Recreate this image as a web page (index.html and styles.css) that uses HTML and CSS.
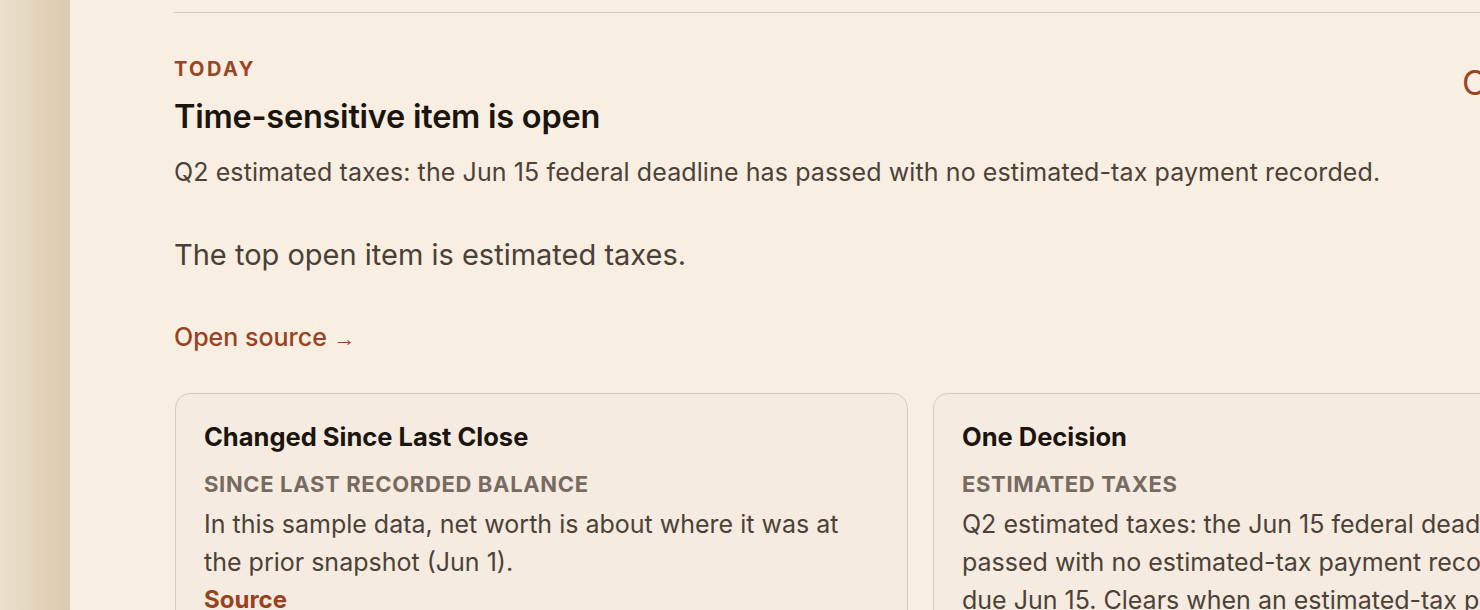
FILE: index.html
```html
<!DOCTYPE html>
<html lang="en">
<head>
<meta charset="utf-8">
<title>Today</title>
<link rel="stylesheet" href="styles.css">
</head>
<body>
<div class="app">
  <aside class="sidebar"></aside>
  <main class="main">
    <div class="rule"></div>
    <section class="today">
      <div class="today-head">
        <div class="today-text">
          <div class="eyebrow">TODAY</div>
          <h1 class="title">Time-sensitive item is open</h1>
          <p class="summary">Q2 estimated taxes: the Jun 15 federal deadline has passed with no estimated-tax payment recorded.</p>
        </div>
        <a class="close-link">Clear</a>
      </div>
      <p class="lead">The top open item is estimated taxes.</p>
      <a class="open-link">Open source <span class="arrow">→</span></a>
    </section>
    <div class="cards">
      <article class="card">
        <h2 class="card-title">Changed Since Last Close</h2>
        <div class="card-label">SINCE LAST RECORDED BALANCE</div>
        <p class="card-body">In this sample data, net worth is about where it was at the prior snapshot (Jun 1).</p>
        <a class="card-link">Source</a>
      </article>
      <article class="card">
        <h2 class="card-title">One Decision</h2>
        <div class="card-label">ESTIMATED TAXES</div>
        <p class="card-body">Q2 estimated taxes: the Jun 15 federal deadline has passed with no estimated-tax payment recorded. Q2 is due Jun 15. Clears when an estimated-tax payment is recorded.</p>
        <a class="card-link">Source</a>
      </article>
    </div>
  </main>
</div>
</body>
</html>
```
FILE: styles.css
```css
html, body {
  margin: 0;
  padding: 0;
  overflow: hidden;
  background: #f8eee2;
}
body {
  font-family: Inter, "Noto Sans", sans-serif;
  color: #1d1712;
}
.app {
  display: flex;
  width: 1800px;
  min-height: 610px;
}
.sidebar {
  width: 70px;
  flex: none;
  background: linear-gradient(90deg, #ebe0cb 0%, #e4d5bd 50%, #dacaae 100%);
}
.main {
  flex: 1;
  padding: 0 0 0 104px;
  background: #f8eee2;
}
.rule {
  height: 1px;
  margin-top: 12px;
  background: #d4c8b9;
}
.today {
  padding-top: 44px;
}
.today-head {
  display: flex;
  align-items: flex-start;
}
.today-text {
  flex: none;
  width: 1288px;
}
.eyebrow {
  font-size: 20px;
  font-weight: 700;
  letter-spacing: 2.4px;
  color: #9a4523;
  line-height: 24px;
}
.title {
  margin: 16px 0 0;
  font-size: 32.5px;
  font-weight: 600;
  line-height: 40px;
  letter-spacing: -0.25px;
  color: #1c140e;
}
.summary {
  margin: 19px 0 0;
  font-size: 25px;
  font-weight: 400;
  line-height: 32px;
  letter-spacing: 0.1px;
  color: #4c4238;
}
.close-link {
  font-size: 34px;
  line-height: 40px;
  color: #9a4523;
  margin-top: 6px;
}
.lead {
  margin: 47px 0 0;
  font-size: 29px;
  font-weight: 400;
  line-height: 40px;
  color: #4a4037;
}
.open-link {
  display: inline-block;
  margin-top: 46px;
  font-size: 25px;
  font-weight: 500;
  color: #98431f;
  line-height: 32px;
}
.arrow {
  font-family: "Liberation Sans", sans-serif;
  font-size: 22px;
  font-weight: 400;
}
.cards {
  display: grid;
  grid-template-columns: 733px 733px;
  gap: 25px;
  margin-top: 38px;
  margin-left: 1px;
}
.card {
  background: #f5ebe1;
  border: 1.5px solid #d7ccbe;
  border-radius: 15px;
  padding: 26px 28px 24px;
}
.card-title {
  margin: 0;
  font-size: 25.5px;
  font-weight: 700;
  line-height: 34px;
  color: #1c140e;
}
.card-label {
  margin-top: 17px;
  font-size: 22px;
  font-weight: 700;
  letter-spacing: 0.65px;
  color: #776b61;
  line-height: 26px;
}
.card-body {
  margin: 8px 0 0;
  font-size: 25px;
  line-height: 38px;
  color: #4c4238;
}
.card-link {
  display: block;
  margin-top: 4px;
  font-size: 24px;
  font-weight: 700;
  color: #98431f;
  line-height: 30px;
}
```
